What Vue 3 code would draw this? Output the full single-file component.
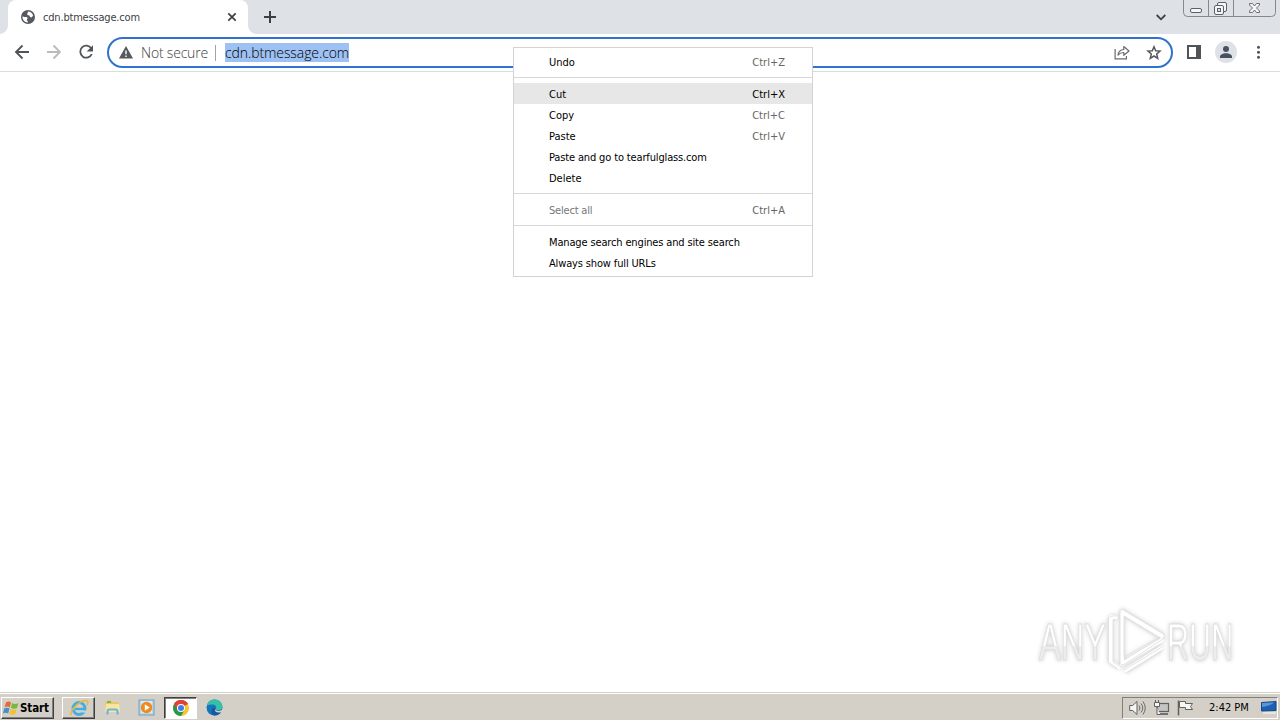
<script setup>
const groups = [
  [{ label: 'Undo', key: 'Ctrl+Z' }],
  [
    { label: 'Cut', key: 'Ctrl+X', active: true },
    { label: 'Copy', key: 'Ctrl+C' },
    { label: 'Paste', key: 'Ctrl+V' },
    { label: 'Paste and go to tearfulglass.com', long: true },
    { label: 'Delete' },
  ],
  [{ label: 'Select all', key: 'Ctrl+A', disabled: true }],
  [{ label: 'Manage search engines and site search', long: true }, { label: 'Always show full URLs', long: true }],
]
</script>

<template>
  <div class="screen">
    <header class="tabs">
      <div class="tab">
        <svg class="globe" width="14" height="14" viewBox="0 0 14 14"><circle cx="7" cy="7" r="7" fill="#55595e"/><path d="M1.500 6.300C3 7.800 5 6.200 6.300 7.600c.9 1-.4 1.400-.5 2.400 0 .8 1.300.6 1.200 2.500C3.900 12.600 1.200 10 1.500 6.300zM6.800 1.500c2.400 0 4.500 1.500 5.300 3.800-.8 1.900-1.500 2.500-2.800 1.800C8.400 6.400 8.900 5.500 7.500 5.300 6 5.100 5.600 3.600 6.800 3z" fill="#fff"/></svg>
        <span class="title">cdn.btmessage.com</span>
        <svg class="close" width="10" height="10" viewBox="0 0 10 10"><path d="M1.300 1.300l7.400 7.400M8.700 1.300L1.300 8.700" stroke="#3c4043" stroke-width="1.700"/></svg>
      </div>
      <svg class="plus" width="12" height="12" viewBox="0 0 12 12"><path d="M6 0v12M0 6h12" stroke="#3c4043" stroke-width="2"/></svg>
      <svg class="chev" width="10" height="7" viewBox="0 0 10 7"><path d="M.7 1l4.300 4.300L9.300 1" fill="none" stroke="#3c4043" stroke-width="1.800"/></svg>
      <svg class="wincontrols" width="94" height="18" viewBox="0 0 94 18">
        <path d="M.5 0v12.500q0 4 4 4h84q4 0 4-4V0M25.500 0v16M50.500 0v16" fill="none" stroke="#85898f"/>
        <rect x="7.500" y="8.500" width="11" height="4" rx="1.500" fill="#f5f6f8" stroke="#5c6068"/>
        <rect x="34.500" y="2.500" width="9" height="9" rx="1.500" fill="#f5f6f8" stroke="#5c6068"/>
        <rect x="31.500" y="5.500" width="9" height="9" rx="1.500" fill="#f5f6f8" stroke="#5c6068"/>
        <rect x="34.500" y="8.500" width="3" height="3" fill="#dee1e6" stroke="#5c6068"/>
        <path d="M66.500 3.500h3l2 2.500 2-2.500h3v1.500l-3 3 3 3v1.500h-3l-2-2.500-2 2.500h-3V11l3-3-3-3z" fill="#f5f6f8" stroke="#5c6068" stroke-width=".9"/>
      </svg>
    </header>

    <div class="toolbar">
      <svg class="nav" width="100" height="37" viewBox="0 0 100 37" fill="none" stroke-width="1.800">
        <path d="M29 18H16.500M22.500 11.500L16 18l6.500 6.500" stroke="#505357"/>
        <path d="M47 18h12.500M53.500 11.500L60 18l-6.500 6.500" stroke="#b9bbbe"/>
        <path d="M91.300 14.400A6 6 0 1 0 91.800 20" stroke="#505357"/><path d="M93 11.200v6.300h-6.300z" fill="#505357"/>
      </svg>
      <div class="omnibox">
        <svg class="warn" width="14" height="13" viewBox="0 0 14 13"><path d="M7 0l7 12.500H0z" fill="#55585c"/><path d="M7 4.500v3.800M7 9.500V11" stroke="#fff" stroke-width="1.400"/></svg>
        <span class="secure">Not secure</span>
        <i class="split"></i>
        <span class="url">cdn.btmessage.com</span>
        <svg class="share" width="16" height="15" viewBox="0 0 16 15" fill="none" stroke="#686b6f" stroke-width="1.200"><path d="M1.100 4v9.900h11.300v-3"/><path d="M4 10c.4-3.600 2.500-5.300 5.800-5.500V1.500L15 6l-5.200 4.300V7.500C7.300 7.500 5.500 8.300 4 10z" stroke-linejoin="round"/></svg>
        <svg class="star" width="16" height="15" viewBox="0 0 16 15"><path d="M8 1.700l1.700 4 4.300.4-3.300 2.900 1 4.300L8 11l-3.700 2.300 1-4.300L2 6.100l4.300-.4z" fill="none" stroke="#55585c" stroke-width="1.500"/></svg>
      </div>
      <svg class="right" width="107" height="37" viewBox="0 0 107 37">
        <rect x="15" y="12" width="12" height="12" fill="none" stroke="#505357" stroke-width="2"/><path d="M23 11h5v14h-5z" fill="#505357"/>
        <circle cx="53" cy="18" r="11" fill="#dee1e6"/><circle cx="53" cy="15" r="3" fill="#4a5064"/><path d="M47 24v-1.500c0-2 3-3.300 6-3.300s6 1.300 6 3.300V24z" fill="#4a5064"/>
        <g fill="#505357"><circle cx="85.500" cy="13.300" r="1.500"/><circle cx="85.500" cy="18.300" r="1.500"/><circle cx="85.500" cy="23.300" r="1.500"/></g>
      </svg>
    </div>

    <main class="page">
      <svg class="mark" width="216" height="76" viewBox="0 0 216 76">
        <defs><linearGradient id="tone" x1="0" y1="0" x2="0" y2="1"><stop offset=".56" stop-color="#fff"/><stop offset=".56" stop-color="#ededed"/></linearGradient></defs>
        <g transform="translate(3 1)">
          <g fill="none" stroke="#fff" stroke-width="4" stroke-linejoin="round" stroke-linecap="round"><path d="M82 15h-5v45l8 5"/><path d="M88 12v50l40-24M88 10l40 24"/><path d="M92 68l35-22"/></g>
          <g fill="none" stroke="#e3e3e3" stroke-width="1" stroke-linejoin="round"><path d="M84 14q-10-1-10 4v42l9 6M79 18v42l8 5M86 9q1-3 5-1l38 23q3 3 0 6L91 62q-5 2-5-2zM90 15v40l34-19zM90 68l38-23M93 71l35-22"/></g>
        </g>
        <text class="any" transform="translate(8 59) scale(.64 1)">ANY</text>
        <text class="any" transform="translate(136 59) scale(.6 1)">RUN</text>
      </svg>
    </main>

    <footer class="taskbar">
      <div class="start">
        <svg width="17" height="16" viewBox="0 0 17 16"><path d="M3 2.500q3-2 5 0L6.800 7.500Q4.500 5.500 1.500 7.300z" fill="#e66a32"/><path d="M9 3q3 1.800 6.500 0L14 8q-3 1.600-6 0z" fill="#79b83e"/><path d="M1.200 8.500q3-1.600 5.300 0L5.200 13.500Q3 12 0 13.300z" fill="#448fd0"/><path d="M7.600 9q3 1.700 6.200 0l-1.500 5q-3 1.500-6 0z" fill="#f1c332"/></svg>
        <b>Start</b>
      </div>
      <div class="task raised">
        <svg width="20" height="18" viewBox="0 0 20 18"><circle cx="10" cy="9.500" r="6" fill="none" stroke="#43aee3" stroke-width="3"/><path d="M6 10h10" stroke="#43aee3" stroke-width="2.400"/><path d="M13 12.500h4" stroke="#d4d0c8" stroke-width="2"/><path d="M2.500 16C-1 12 14-1 18.300 2.200c1 .8.700 2.200-.2 3.800" fill="none" stroke="#e9b936" stroke-width="1.600"/></svg>
      </div>
      <div class="task">
        <svg width="17" height="17" viewBox="0 0 17 17"><path d="M1 3l5-2 2 2h7v10H1z" fill="#e8c865"/><path d="M2 5h13l1 8H1z" fill="#f8e6a0"/><path d="M3 3h4" stroke="#5fae5e" stroke-width="1.500"/><path d="M3.500 15.500v-3q0-2 2-2h6q2 0 2 2v3" fill="none" stroke="#6db5dc" stroke-width="2.200"/></svg>
      </div>
      <div class="task">
        <svg width="17" height="17" viewBox="0 0 17 17"><rect x="1" y="1" width="15" height="15" fill="#b9d7ec" stroke="#6d9ebf"/><rect x="3" y="2" width="11" height="12" fill="#dbe9f2"/><circle cx="8.500" cy="8.500" r="5.700" fill="#f08a1e"/><path d="M6.800 5.300l5 3.200-5 3.200z" fill="#fff"/></svg>
      </div>
      <div class="task sunken">
        <svg width="16" height="16" viewBox="0 0 16 16"><circle cx="8" cy="8" r="8" fill="#f6c62d"/><path d="M8 8L1.100 4A8 8 0 0 1 14.900 4z" fill="#dd4437"/><path d="M8 8L1.100 4A8 8 0 0 0 8 16l3.500-6z" fill="#25984d"/><path d="M8 4h6.900A8 8 0 0 0 1.100 4l3.400 6z" fill="#dd4437"/><circle cx="8" cy="8" r="4" fill="#fff"/><circle cx="8" cy="8" r="3" fill="#3f7ee8"/></svg>
      </div>
      <div class="task">
        <svg width="17" height="17" viewBox="0 0 17 17"><circle cx="8.500" cy="8.500" r="8" fill="#1674bd"/><path d="M1 6.500C2 2 5.500.5 8.500.5c5 0 8 3.500 8 7 0 3-2.500 4-5 4-2 0-2.500-1-1.500-2C11 7 8 4 1 6.500z" fill="#39bfa6"/><path d="M9.500 10c-1 2 2 4 6 2.500-1.500 2.500-4 4-7 4-4-1-4-7-.5-8z" fill="#155a9e"/><path d="M10 9.500c-1 1.500 0 2.500 2 2.500s3.500-.5 4.500-2l.3 2-1.500 1.200q-6 1-6.300-2z" fill="#d4d0c8"/></svg>
      </div>
      <div class="tray">
        <svg width="68" height="18" viewBox="0 0 68 18" fill="none" stroke="#5f6060">
          <path d="M.7 6.500h3L8 2.500v13l-4.300-4h-3z" fill="#f6f6f4"/><path d="M10 6.500q2 2.500 0 5M12 4.500q3.500 4.500 0 9M14 2.500q4.500 6.500 0 13" stroke-width=".9"/>
          <rect x="28.500" y="4.500" width="11" height="8" fill="#c4c4c2" stroke-width="1.200"/><path d="M31 15h8" stroke-width="1.700"/><path d="M25.500 3.500h5v4h-5zM26.500 1v2M29.500 1v2M28 8v7.500h3" fill="#f6f6f4"/>
          <path d="M49.500 1.500v15" stroke-width="1.500"/><path d="M50.500 2.500h6v2h7l-2 3 2 3h-7v-2h-6z" fill="#f6f6f4"/>
        </svg>
        <span class="clock">2:42 PM</span>
        <svg class="desk" width="16" height="13" viewBox="0 0 16 13"><path d="M.5 1.500L15 .5v9L.5 10z" fill="#1d60b1" stroke="#174785"/><path d="M1 2l12-.7Q10 5 1 6z" fill="#5498d8"/><path d="M2 12h13" stroke="#eee" stroke-width="1.500"/></svg>
      </div>
    </footer>

    <div class="menu">
      <div v-for="(group, i) in groups" :key="i" class="group">
        <div v-for="item in group" :key="item.label" class="item" :class="{ active: item.active, disabled: item.disabled, long: item.long }">
          <span>{{ item.label }}</span><span class="key">{{ item.key }}</span>
        </div>
      </div>
    </div>
  </div>
</template>

<style>
body { margin: 0; overflow: hidden; }
</style>
<style scoped>
.screen { position: relative; width: 1280px; height: 720px; display: flex; flex-direction: column; background: #fff; font: 11px/14px "DejaVu Sans Condensed", "DejaVu Sans", sans-serif; font-stretch: condensed; color: #202124; }
* { box-sizing: border-box; }
svg { display: block; flex: none; }
span, b { white-space: nowrap; }
.tabs { height: 34px; flex: none; background: #dee1e6; display: flex; align-items: center; padding-left: 8px; }
.tab { position: relative; width: 240px; height: 34px; background: #fff; border-radius: 8px 8px 0 0; display: flex; align-items: center; padding: 0 11px 0 13px; }
.tab::before, .tab::after { content: ""; position: absolute; bottom: 0; width: 8px; height: 8px; }
.tab::before { left: -8px; background: radial-gradient(circle at 0 0, transparent 7.5px, #fff 8px); }
.tab::after { right: -8px; background: radial-gradient(circle at 100% 0, transparent 7.5px, #fff 8px); }
.title { margin-left: 8px; padding-top: 1px; flex: 1; color: #3c3f43; letter-spacing: -.19px; }
.plus { margin-left: 16px; }
.chev { margin-left: auto; }
.wincontrols { align-self: flex-start; margin: 0 3px 0 17px; }
.toolbar { height: 38px; flex: none; display: flex; border-bottom: 1px solid #dadce0; background: #fff; }
.nav { margin-right: 7px; }
.omnibox { width: 1066px; height: 31px; margin-top: 3px; border: 2px solid #2f72cf; border-radius: 16px; display: flex; align-items: center; padding: 0 9px 0 10px; font: 14px/20px "Open Sans", sans-serif; font-weight: 300; }
.secure { margin-left: 8px; width: 67px; color: #3b3e42; letter-spacing: -.2px; }
.split { width: 1px; height: 16px; background: #9fa3a7; margin: 0 9px 0 7px; }
.url { height: 20px; width: 124px; background: linear-gradient(#9dc1f2, #9dc1f2) 0 0 / 100% 19px no-repeat; color: #000; letter-spacing: -.09px; }
.share { margin-left: auto; }
.star { margin-left: 16px; }
.page { flex: 1; display: flex; justify-content: flex-end; align-items: flex-end; padding: 0 33px 15px 0; }
.mark { filter: drop-shadow(0 0 2px #ccc); }
.any { font: 51px "Liberation Sans", sans-serif; fill: url(#tone); stroke: #ddd; stroke-width: .8px; }
.taskbar { height: 28px; flex: none; background: #d4d0c8; border-top: 1px solid #d4d0c8; box-shadow: inset 0 1px #fff; display: flex; align-items: center; padding: 3px 2px 1px 1px; }
.start, .raised { border: 1px solid; border-color: #fff #404040 #404040 #fff; box-shadow: inset -1px -1px #808080; }
.start { width: 53px; height: 22px; display: flex; align-items: center; padding-left: 1px; margin-right: 8px; color: #000; }
.start b { font-size: 11.5px; letter-spacing: -.1px; }
.task { width: 33px; height: 22px; display: flex; align-items: center; justify-content: center; margin-right: 1px; }
.sunken { background: #fff; border: 1px solid; border-color: #404040 #fff #fff #404040; box-shadow: inset 1px 1px #808080; }
.tray { margin-left: auto; height: 22px; width: 156px; border: 1px solid; border-color: #808080 #fff #fff #808080; display: flex; align-items: center; padding-left: 6px; color: #000; }
.clock { margin-left: 12px; }
.desk { margin-left: auto; }
.menu { position: absolute; left: 513px; top: 47px; width: 300px; height: 230px; background: #fff; border: 1px solid #d3d3d3; padding-top: 3px; color: #000; }
.group + .group { border-top: 1px solid #d8d8d8; margin-top: 5px; padding-top: 5px; }
.item { height: 21px; display: flex; align-items: center; justify-content: space-between; padding: 2px 27px 0 35px; }
.long span { letter-spacing: -.145px; }
.key { color: #666; }
.active { background: #e7e7e7; }
.active .key { color: #000; }
.disabled { color: #777; letter-spacing: -.2px; }
.disabled .key { letter-spacing: 0; }
</style>
